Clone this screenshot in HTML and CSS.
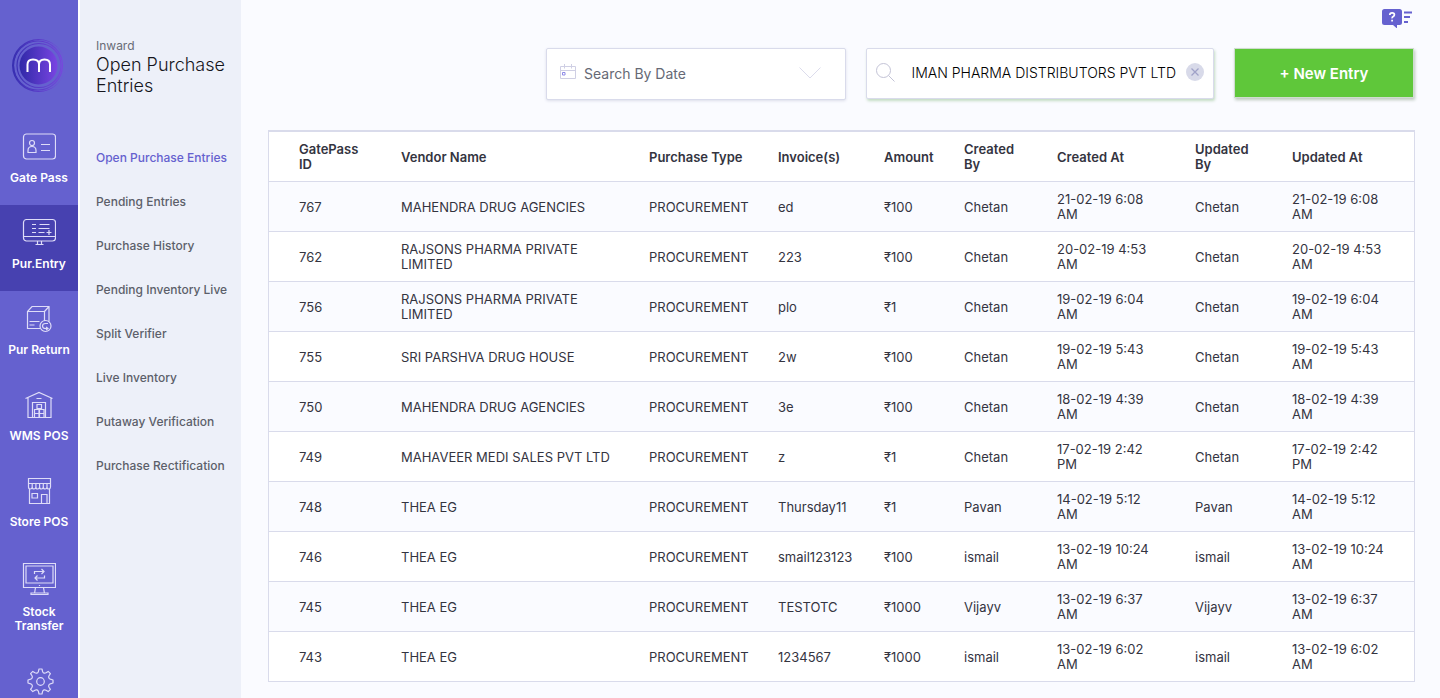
FILE: index.html
```html
<!DOCTYPE html>
<html lang="en">
<head>
<meta charset="utf-8">
<title>Open Purchase Entries</title>
<link rel="stylesheet" href="styles.css">
</head>
<body>
<div class="app">
  <nav class="rail" aria-label="Modules">
    <a class="brand" href="#" aria-label="Home">
      <svg width="56" height="56" viewBox="0 0 56 56" fill="none">
        <defs>
          <linearGradient id="disc" x1="0" x2="1" y1="0" y2="0"><stop offset="0" stop-color="#3029a8"/><stop offset="1" stop-color="#7a45e2"/></linearGradient>
          <linearGradient id="ring" gradientUnits="userSpaceOnUse" x1="0" x2="56" y1="28" y2="28"><stop offset="0" stop-color="#352eb0"/><stop offset="1" stop-color="#7c49e0"/></linearGradient>
        </defs>
        <path fill="url(#ring)" fill-rule="evenodd" d="M27.500 1a26.500 26.500 0 1 0 0 53a26.500 26.500 0 1 0 0-53ZM28.500 2a25.500 25.500 0 1 1 0 51a25.500 25.500 0 1 1 0-51Z"/>
        <circle cx="27" cy="27.500" r="24.500" stroke="url(#ring)" stroke-width="1.200"/>
        <circle cx="28" cy="27.500" r="22" stroke="url(#ring)" stroke-width="1.200"/>
        <circle cx="27.500" cy="27.500" r="19" fill="url(#disc)"/>
        <path d="M16.500 34V26.500q0-5 5.500-5q6 0 6 5V34M28 26.500q0-5 5.500-5q5.500 0 5.500 5V34" stroke="#fff" stroke-width="2"/>
      </svg>
    </a>
    <a class="module" href="#">
      <svg class="module-icon" width="34" height="30" viewBox="0 0 34 30"><rect x="1.500" y="3" width="32" height="25" rx="3"/><circle cx="10" cy="12" r="2.500"/><path d="M6 21.500v-2q0-4 4-4t4 4v2ZM19 13.500h9M19 19.500h9"/></svg>
      <span>Gate Pass</span>
    </a>
    <a class="module module-active" href="#" aria-current="page">
      <svg class="module-icon" width="34" height="30" viewBox="0 0 34 30"><rect x="1.500" y="2.500" width="32" height="21.500" rx="3"/><path d="M1.500 19.500h32M15.500 24v3.500M19.500 24v3.500M13.500 27.500h8M10 7.500h4M17.500 7.500h10M10 11.500h4M16.500 11.500h11M10 15.500h4M16.500 15.500h6M24.500 15.500h5M27 13v5"/></svg>
      <span>Pur.Entry</span>
    </a>
    <a class="module" href="#">
      <svg class="module-icon" width="34" height="30" viewBox="0 0 34 30"><path d="M18.500 25.500H5.500V8.500L10 3.500h17v15M5.500 8.500H22.500v9.500M22.500 8.500l4.500-5M7.500 18.500h10M7.500 22h5"/><circle cx="23.500" cy="23" r="5.500"/><path d="M26 20.500h-2.500q-3 0-3 2.500t3 2.500h2M24 24l2 1.500l-2 1.500"/></svg>
      <span>Pur Return</span>
    </a>
    <a class="module" href="#">
      <svg class="module-icon" width="34" height="30" viewBox="0 0 34 30"><path d="M3.500 9.500L17 3.500l13.500 6M6 8.500v20h23v-20M14.500 9.500h5M10.500 28.500V13.500h13v15M15 15.500h4.500v4H15ZM12.500 20.500H17v4h-4.500ZM17.500 20.500H22v4h-4.500ZM12.500 24.500H17v4h-4.500ZM17.500 24.500H22v4h-4.500Z"/></svg>
      <span>WMS POS</span>
    </a>
    <a class="module" href="#">
      <svg class="module-icon" width="34" height="30" viewBox="0 0 34 30"><path d="M6.500 3.500h22v5h-22ZM7.500 14v14.500h20V14M6.500 8.500v3.500q0 2 1.800 2t1.900-2V8.500M10.200 12q0 2 1.800 2t1.900-2V8.500M13.900 12q0 2 1.800 2t1.900-2V8.500M17.600 12q0 2 1.800 2t1.900-2V8.500M21.300 12q0 2 1.800 2t1.900-2V8.500M25 12q0 2 1.700 2t1.800-2V8.500M10 18.500h5.500v4.500H10ZM19.500 28.500v-9H25v9"/></svg>
      <span>Store POS</span>
    </a>
    <a class="module" href="#">
      <svg class="module-icon" width="34" height="34" viewBox="0 0 34 34"><path d="M1.500 2.500h32v24h-32ZM4 5h27v17H4ZM17.500 24v1M13.500 26.500l-1 6M21.500 26.500l1 6M9 33.500v-1.500h17v1.500ZM12.500 13v-2.500h9.500M19.500 8l2.500 2.500L19.500 13M22.500 14.500V17H13M15.500 14.500L13 17l2.500 2.500"/></svg>
      <span>Stock<br>Transfer</span>
    </a>
    <a class="module" href="#" aria-label="Settings">
      <svg class="module-icon" width="34" height="30" viewBox="0 0 34 30" stroke-linejoin="round"><circle cx="18.500" cy="16.500" r="3.800"/><path d="M17 4h3l.6 2.600q.4 1.200 1.400 1.500t2-.3l2.200-1.400l2.200 2.200l-1.400 2.200q-.6 1-.2 2t1.500 1.400l2.700.8v3l-2.700.8q-1.100.4-1.500 1.400t.2 2l1.400 2.200l-2.200 2.200l-2.200-1.400q-1-.6-2-.3t-1.400 1.500l-.6 2.600h-3l-.6-2.600q-.4-1.200-1.400-1.500t-2 .3l-2.200 1.400l-2.200-2.200l1.400-2.200q.6-1 .2-2t-1.500-1.400l-2.700-.8v-3l2.700-.8q1.100-.4 1.500-1.400t-.2-2l-1.400-2.200l2.200-2.200l2.200 1.400q1 .6 2 .3t1.400-1.500Z"/></svg>
    </a>
  </nav>

  <aside class="panel">
    <p class="panel-kicker">Inward</p>
    <h1 class="panel-title">Open Purchase Entries</h1>
    <nav class="panel-nav" aria-label="Inward">
      <a class="panel-link panel-link-active" href="#">Open Purchase Entries</a>
      <a class="panel-link" href="#">Pending Entries</a>
      <a class="panel-link" href="#">Purchase History</a>
      <a class="panel-link" href="#">Pending Inventory Live</a>
      <a class="panel-link" href="#">Split Verifier</a>
      <a class="panel-link" href="#">Live Inventory</a>
      <a class="panel-link" href="#">Putaway Verification</a>
      <a class="panel-link" href="#">Purchase Rectification</a>
    </nav>
  </aside>

  <main class="main">
    <div class="help-row">
      <button class="icon-button" type="button" aria-label="Help">
        <svg width="30" height="20" viewBox="0 0 30 20"><path fill="#6561cf" d="M2.500 1h15a2.500 2.500 0 0 1 2.500 2.500v11a2.500 2.500 0 0 1-2.500 2.500H15v3.500L11 17H2.500A2.500 2.500 0 0 1 0 14.500v-11A2.500 2.500 0 0 1 2.500 1Z"/><path d="M7.800 7q0-2.200 2.300-2.200t2.300 2q0 1.200-1.200 1.800t-1.100 1.700M10.100 11.700v1.800" fill="none" stroke="#fff" stroke-width="1.700"/><path d="M22 4.500h8M22 9h6M22 14h4" stroke="#6561cf" stroke-width="2.200"/></svg>
      </button>
    </div>
    <div class="toolbar">
      <div class="field date-field">
        <svg class="field-icon calendar" width="16" height="17" viewBox="0 0 16 17" fill="none" stroke="#cfcfe4"><path d="M.5 3.500h15v12H.5ZM.5 7.500h15M4.500 1v4.500M11.500 1v4.500"/><path d="M2.500 9.500H5V12H2.500Z" stroke="#8f8be8"/></svg>
        <select class="date-select" aria-label="Search by date"><option>Search By Date</option></select>
        <svg class="chevron" width="22" height="12" viewBox="0 0 22 12" fill="none" stroke="#dcdcec"><path d="M.5.5L11 11L21.500.5"/></svg>
      </div>
      <div class="field search-field">
        <svg class="field-icon" width="19" height="19" viewBox="0 0 19 19" fill="none" stroke="#c3c3d6"><circle cx="7.500" cy="7.500" r="7"/><path d="M12.500 12.500l6 6"/></svg>
        <input class="search-input" type="text" aria-label="Search by vendor" value="IMAN PHARMA DISTRIBUTORS PVT LTD">
        <button class="icon-button" type="button" aria-label="Clear search">
          <svg width="18" height="18" viewBox="0 0 18 18"><circle cx="9" cy="9" r="9" fill="#d8dae9"/><path d="M5.500 5.500l7 7M12.500 5.500l-7 7" stroke="#a0a2c8" stroke-width="1.300"/></svg>
        </button>
      </div>
      <button class="new-entry" type="button">+ New Entry</button>
    </div>

    <table class="entries">
      <colgroup><col class="col-id"><col class="col-vendor"><col class="col-type"><col class="col-invoice"><col class="col-amount"><col class="col-created-by"><col class="col-created-at"><col class="col-updated-by"><col class="col-updated-at"></colgroup>
      <thead>
        <tr><th>GatePass ID</th><th>Vendor Name</th><th>Purchase Type</th><th>Invoice(s)</th><th>Amount</th><th>Created By</th><th class="created-at">Created At</th><th>Updated By</th><th>Updated At</th></tr>
      </thead>
      <tbody>
        <tr><td>767</td><td>MAHENDRA DRUG AGENCIES</td><td>PROCUREMENT</td><td>ed</td><td>₹100</td><td>Chetan</td><td class="created-at">21-02-19 6:08 AM</td><td>Chetan</td><td>21-02-19 6:08 AM</td></tr>
        <tr><td>762</td><td>RAJSONS PHARMA PRIVATE LIMITED</td><td>PROCUREMENT</td><td>223</td><td>₹100</td><td>Chetan</td><td class="created-at">20-02-19 4:53 AM</td><td>Chetan</td><td>20-02-19 4:53 AM</td></tr>
        <tr><td>756</td><td>RAJSONS PHARMA PRIVATE LIMITED</td><td>PROCUREMENT</td><td>plo</td><td>₹1</td><td>Chetan</td><td class="created-at">19-02-19 6:04 AM</td><td>Chetan</td><td>19-02-19 6:04 AM</td></tr>
        <tr><td>755</td><td>SRI PARSHVA DRUG HOUSE</td><td>PROCUREMENT</td><td>2w</td><td>₹100</td><td>Chetan</td><td class="created-at">19-02-19 5:43 AM</td><td>Chetan</td><td>19-02-19 5:43 AM</td></tr>
        <tr><td>750</td><td>MAHENDRA DRUG AGENCIES</td><td>PROCUREMENT</td><td>3e</td><td>₹100</td><td>Chetan</td><td class="created-at">18-02-19 4:39 AM</td><td>Chetan</td><td>18-02-19 4:39 AM</td></tr>
        <tr><td>749</td><td>MAHAVEER MEDI SALES PVT LTD</td><td>PROCUREMENT</td><td>z</td><td>₹1</td><td>Chetan</td><td class="created-at">17-02-19 2:42 PM</td><td>Chetan</td><td>17-02-19 2:42 PM</td></tr>
        <tr><td>748</td><td>THEA EG</td><td>PROCUREMENT</td><td>Thursday11</td><td>₹1</td><td>Pavan</td><td class="created-at">14-02-19 5:12 AM</td><td>Pavan</td><td>14-02-19 5:12 AM</td></tr>
        <tr><td>746</td><td>THEA EG</td><td>PROCUREMENT</td><td>smail123123</td><td>₹100</td><td>ismail</td><td class="created-at">13-02-19 10:24 AM</td><td>ismail</td><td>13-02-19 10:24 AM</td></tr>
        <tr><td>745</td><td>THEA EG</td><td>PROCUREMENT</td><td>TESTOTC</td><td>₹1000</td><td>Vijayv</td><td class="created-at">13-02-19 6:37 AM</td><td>Vijayv</td><td>13-02-19 6:37 AM</td></tr>
        <tr><td>743</td><td>THEA EG</td><td>PROCUREMENT</td><td>1234567</td><td>₹1000</td><td>ismail</td><td class="created-at">13-02-19 6:02 AM</td><td>ismail</td><td>13-02-19 6:02 AM</td></tr>
      </tbody>
    </table>
  </main>
</div>
</body>
</html>
```
FILE: styles.css
```css
* { box-sizing: border-box; }

body {
  margin: 0;
  background: #fafbff;
  color: #34343f;
  font-family: Inter, "Liberation Sans", sans-serif;
  font-size: 13px;
}

a { color: inherit; text-decoration: none; }
button, input, select { font: inherit; color: inherit; }

.app {
  display: flex;
  height: 100vh;
  overflow: hidden;
}

/* Module rail */
.rail {
  flex: none;
  width: 78px;
  background: #6561cf;
  color: #fff;
  overflow: hidden;
}

.brand {
  display: flex;
  justify-content: center;
  padding: 38px 0 25px;
}

.module {
  display: flex;
  flex-direction: column;
  align-items: center;
  gap: 10px;
  padding: 12px 0 20px;
  font-size: 12px;
  font-weight: 600;
  line-height: 14px;
  text-align: center;
}

.module-active { background: #4741b0; }

.module-icon {
  fill: none;
  stroke: #dedcf8;
  stroke-width: 1.2;
}

/* Section panel */
.panel {
  flex: none;
  width: 163px;
  padding: 38px 0 0 16px;
  border-left: 2px solid #fff;
  background: #edf0f9;
}

.panel-kicker {
  margin: 0;
  color: #686b76;
  font-size: 12px;
  line-height: 16px;
}

.panel-title {
  margin: 0;
  color: #15151c;
  font-size: 18px;
  font-weight: 300;
  line-height: 21px;
}

.panel-nav {
  display: flex;
  flex-direction: column;
  gap: 28px;
  margin-top: 54px;
}

.panel-link {
  color: #5c5f6a;
  font-size: 12px;
  font-weight: 500;
  line-height: 16px;
}

.panel-link-active { color: #6561cf; }

/* Content */
.main {
  flex: 1;
  min-width: 0;
  padding: 8px 25px 16px 27px;
  overflow: hidden;
}

.icon-button {
  display: flex;
  padding: 0;
  border: 0;
  background: none;
}

.help-row {
  display: flex;
  justify-content: flex-end;
  padding-right: 3px;
}

.toolbar {
  display: flex;
  justify-content: flex-end;
  align-items: flex-start;
  gap: 20px;
  margin: 20px 1px 30px 0;
}

.field {
  display: flex;
  align-items: center;
  border: 1px solid #d9dbeb;
  border-radius: 2px;
  background: #fff;
}

.field-icon { flex: none; }

.date-field {
  width: 300px;
  height: 52px;
  padding: 0 24px 2px 13px;
  box-shadow: 0 1px 3px #dcdeea;
}

.calendar { margin-bottom: 4px; }

.date-select {
  flex: 1;
  min-width: 0;
  padding: 0 8px;
  border: 0;
  background: none;
  color: #666975;
  font-size: 14px;
  appearance: none;
}

.search-field {
  width: 348px;
  height: 51px;
  padding: 0 9px 3px;
  box-shadow: 1px 2px 3px #c3dcc3;
}

.search-input {
  flex: 1;
  min-width: 0;
  padding: 0 10px;
  border: 0;
  background: none;
  color: #000;
  font-size: 14px;
  font-weight: 300;
  text-align: right;
}

.new-entry {
  width: 180px;
  height: 50px;
  border: 1px solid #cfdccf;
  background: #5fc73a;
  box-shadow: 1px 2px 3px #bcc8bc;
  color: #fff;
  font-size: 15px;
  font-weight: 600;
}

/* Entries table */
.entries {
  width: 100%;
  table-layout: fixed;
  border-collapse: separate;
  border-spacing: 0;
  border: 1px solid #d9dbeb;
  border-top-width: 2px;
  border-bottom: 0;
  background: #fff;
  line-height: 15px;
}

.entries th,
.entries td {
  height: 50px;
  padding: 1px 30px 0 0;
  border-bottom: 1px solid #d9dbeb;
  text-align: left;
  vertical-align: middle;
}

.entries th { font-weight: 600; }
.entries th:first-child, .entries td:first-child { padding-left: 30px; }
.entries th:last-child, .entries td:last-child { padding-right: 20px; }
.entries .created-at { padding-right: 40px; }
.entries tbody tr:nth-child(odd) { background: #fafbff; }

.col-id { width: 132px; }
.col-vendor { width: 248px; }
.col-type { width: 129px; }
.col-invoice { width: 106px; }
.col-amount { width: 80px; }
.col-created-by { width: 93px; }
.col-created-at { width: 138px; }
.col-updated-by { width: 97px; }
.col-updated-at { width: 122px; }
```
